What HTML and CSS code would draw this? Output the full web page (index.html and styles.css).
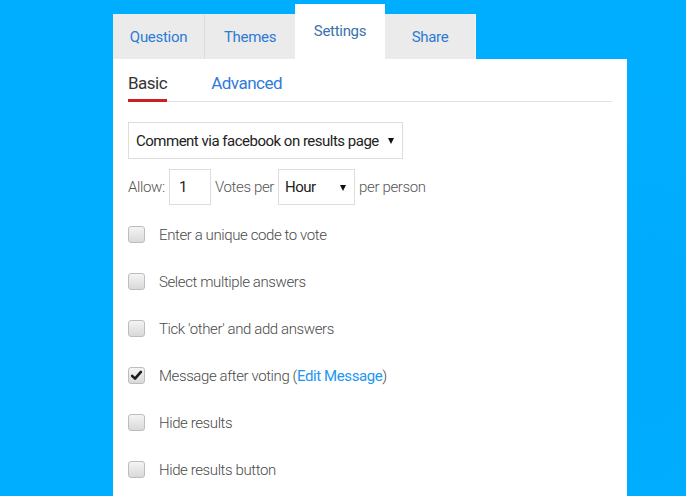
FILE: index.html
```html
<!DOCTYPE html>
<html lang="en">
<head>
  <meta charset="UTF-8">
  <meta name="viewport" content="width=device-width, initial-scale=1.0">
  <title>Poll settings</title>
  <link rel="stylesheet" href="styles.css">
</head>
<body>
  <div class="editor">
    <ul class="tabs">
      <li class="tab-question"><a href="#">Question</a></li>
      <li><a href="#">Themes</a></li>
      <li class="active"><a href="#">Settings</a></li>
      <li class="tab-share"><a href="#">Share</a></li>
    </ul>

    <div class="panel">
      <ul class="subtabs">
        <li class="active"><a href="#">Basic</a></li>
        <li><a href="#">Advanced</a></li>
      </ul>

      <div class="select-wrap">
        <select class="comments">
          <option>Comment via facebook on results page</option>
        </select>
      </div>

      <div class="allow-row">
        <span>Allow:</span>
        <input class="votes" type="text" value="1">
        <span>Votes per</span>
        <div class="select-wrap small">
          <select class="period">
            <option>Hour</option>
          </select>
        </div>
        <span>per person</span>
      </div>

      <ul class="options">
        <li><label><span class="box"></span>Enter a unique code to vote</label></li>
        <li><label><span class="box"></span>Select multiple answers</label></li>
        <li><label><span class="box"></span>Tick 'other' and add answers</label></li>
        <li>
          <label>
            <span class="box checked">
              <svg viewBox="0 0 16 16" width="13" height="13"><path d="M2.6 8.4 L6.2 11.8 L13.4 3.6" fill="none" stroke="#1a1a1a" stroke-width="3.2" stroke-linecap="round" stroke-linejoin="round"/></svg>
            </span>
            Message after voting (<a href="#" class="edit-link">Edit Message</a>)
          </label>
        </li>
        <li><label><span class="box"></span>Hide results</label></li>
        <li><label><span class="box"></span>Hide results button</label></li>
      </ul>
    </div>
  </div>
</body>
</html>
```

FILE: styles.css
```css
html, body {
  height: 100%;
}

body {
  margin: 0;
  font-family: Roboto, "Liberation Sans", sans-serif;
  background-color: #00aeff;
  background-image: radial-gradient(ellipse 120px 260px at 650px 330px, rgba(0, 120, 220, 0.08), rgba(0, 120, 220, 0));
  overflow: hidden;
}

.editor {
  width: 514px;
  margin-left: 113px;
  padding-top: 4px;
  display: flex;
  flex-direction: column;
  height: 100%;
  box-sizing: border-box;
}

/* top tabs */
.tabs {
  list-style: none;
  margin: 0;
  padding: 0;
  display: flex;
  align-items: flex-end;
}

.tabs li {
  width: 90px;
  height: 45px;
  background-color: #ebebeb;
}

.tabs li.tab-question {
  width: 91px;
  border-right: 1px solid #dcdcdc;
}

.tabs li.tab-share {
  border-right: 1px solid #f2f2f2;
}

.tabs li.active {
  height: 55px;
  background-color: #fff;
}

.tabs a {
  display: flex;
  align-items: center;
  justify-content: center;
  height: 100%;
  font-size: 15px;
  letter-spacing: -0.3px;
  color: #2b7bd6;
  text-decoration: none;
}

.tabs li.active a {
  color: #3a72ad;
  padding-bottom: 1px;
  box-sizing: border-box;
}

/* panel */
.panel {
  flex: 1;
  background-color: #fff;
  padding: 0 15px;
}

.subtabs {
  list-style: none;
  margin: 0;
  padding: 0;
  display: flex;
  gap: 44px;
  border-bottom: 1px solid #e2e2e2;
}

.subtabs li {
  padding: 14px 0 6px;
  margin-bottom: -1px;
  border-bottom: 3px solid transparent;
}

.subtabs li.active {
  border-bottom-color: #cc1f1f;
}

.subtabs a {
  font-size: 17px;
  line-height: 20px;
  letter-spacing: -0.5px;
  color: #2f7bd9;
  text-decoration: none;
}

.subtabs li.active a {
  color: #333;
}

/* selects */
.select-wrap {
  position: relative;
  display: inline-block;
  margin-top: 20px;
}

.select-wrap::after {
  content: "";
  position: absolute;
  right: 9px;
  top: 16px;
  border-left: 3.5px solid transparent;
  border-right: 3.5px solid transparent;
  border-top: 6px solid #111;
  pointer-events: none;
}

select {
  -webkit-appearance: none;
  appearance: none;
  font-family: inherit;
  font-size: 15px;
  letter-spacing: -0.5px;
  color: #222;
  background-color: #fff;
  border: 1px solid #ddd;
  border-radius: 0;
  height: 37px;
  outline: none;
}

.comments {
  width: 275px;
  padding: 0 0 0 7px;
}

.select-wrap.small {
  margin-top: 0;
}

.period {
  width: 77px;
  height: 36px;
  padding: 0 0 0 6px;
}

/* allow row */
.allow-row {
  display: flex;
  align-items: center;
  gap: 4px;
  margin-top: 10px;
  font-size: 15px;
  font-weight: 300;
  letter-spacing: -0.35px;
  color: #555;
}

.votes {
  width: 42px;
  height: 36px;
  box-sizing: border-box;
  border: 1px solid #ddd;
  padding: 0 0 0 9px;
  font-family: inherit;
  font-size: 15px;
  color: #222;
  outline: none;
}

/* checkbox options */
.options {
  list-style: none;
  margin: 6px 0 0;
  padding: 0;
}

.options li {
  height: 47px;
  display: flex;
  align-items: center;
}

.options label {
  display: flex;
  align-items: center;
  font-size: 15px;
  font-weight: 300;
  letter-spacing: -0.4px;
  color: #4a4a4a;
}

.box {
  width: 15px;
  height: 15px;
  margin-right: 14px;
  border: 1px solid #bdbdbd;
  border-radius: 3px;
  background: linear-gradient(#f4f4f4, #d9d9d9);
  display: flex;
  align-items: center;
  justify-content: center;
}

.edit-link {
  color: #2196f3;
  text-decoration: none;
  font-weight: 400;
}
```
